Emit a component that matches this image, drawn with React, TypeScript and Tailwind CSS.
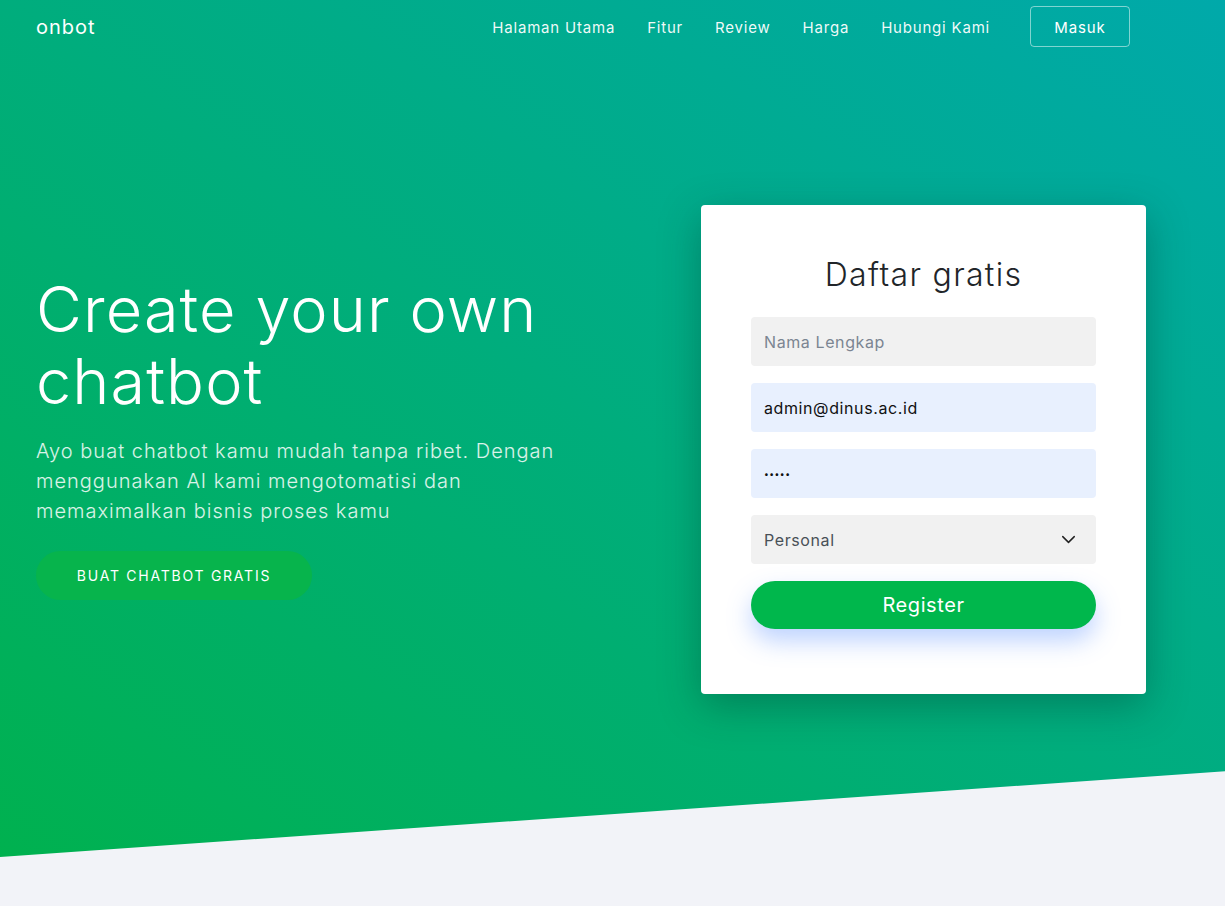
import { ChevronDown } from "lucide-react";

const navLinks = ["Halaman Utama", "Fitur", "Review", "Harga", "Hubungi Kami"];

function Navbar() {
  return (
    <nav className="flex h-[53px] items-center justify-between pl-9 pr-[95px]">
      <a className="text-[20px] tracking-[1px] text-white">onbot</a>
      <div className="flex items-center">
        <ul className="flex items-center gap-8 pt-[3px] text-[15px] tracking-[0.8px] text-white/95">
          {navLinks.map((l) => (
            <li key={l}>{l}</li>
          ))}
        </ul>
        <button className="ml-10 h-[41px] w-[100px] rounded-[4px] border border-white/50 pt-[3px] text-[15px] tracking-[0.9px] text-white">
          Masuk
        </button>
      </div>
    </nav>
  );
}

function RegisterCard() {
  return (
    <div className="w-[445px] rounded-[4px] bg-white px-[50px] pt-[50px] pb-[65px] shadow-[0_12px_40px_rgba(0,50,40,0.35)]">
      <h2 className="mb-[22px] text-center text-[32px] font-light leading-[40px] tracking-[1.3px] text-[#212529]">Daftar gratis</h2>
      <form className="flex flex-col gap-[17px] tracking-[0.6px]" onSubmit={(e) => e.preventDefault()}>
        <input
          type="text"
          placeholder="Nama Lengkap"
          className="h-[49px] rounded-[4px] bg-[#f1f1f1] px-[13px] text-[16px] text-[#212529] outline-none placeholder:text-[#7b8591]"
        />
        <input
          type="email"
          defaultValue="admin@dinus.ac.id"
          className="h-[49px] rounded-[4px] bg-[#e8f0fe] px-[13px] text-[16px] text-[#111] outline-none"
        />
        <input
          type="password"
          defaultValue="12345"
          className="h-[49px] rounded-[4px] bg-[#e8f0fe] px-[13px] text-[8.5px] tracking-[0.5px] text-[#111] outline-none"
        />
        <div className="relative">
          <select className="h-[49px] w-full appearance-none rounded-[4px] bg-[#f1f1f1] px-[13px] text-[16px] text-[#495057] outline-none">
            <option>Personal</option>
            <option>Bisnis</option>
          </select>
          <ChevronDown className="pointer-events-none absolute right-[16px] top-[13px] text-[#222]" size={23} strokeWidth={1.5} />
        </div>
        <button
          type="submit"
          className="h-[48px] rounded-full bg-[#00b74c] text-[20px] text-white shadow-[0_12px_24px_rgba(70,130,255,0.35)]"
        >
          Register
        </button>
      </form>
    </div>
  );
}

export default function App() {
  return (
    <div className="min-h-screen bg-[#f2f3f8] font-['Inter',sans-serif]">
      <section className="h-[857px] bg-[linear-gradient(to_top_right,#00b14f,#00a9aa)] [clip-path:polygon(0_0,100%_0,100%_90%,0_100%)]">
        <Navbar />
        <div className="flex items-start justify-between pl-9 pr-[79px] pt-[152px]">
          <div className="mt-[68px] w-[560px] text-white">
            <h1 className="text-[63px] font-light leading-[72px] tracking-[1.1px]">Create your own chatbot</h1>
            <p className="mt-[19px] text-[20px] font-light leading-[30px] tracking-[1px] text-white/85">
              Ayo buat chatbot kamu mudah tanpa ribet. Dengan menggunakan AI kami mengotomatisi dan memaximalkan bisnis proses kamu
            </p>
            <button className="mt-[25px] h-[49px] w-[276px] rounded-full bg-[#07b44c] text-[14px] tracking-[1.75px] text-white">
              BUAT CHATBOT GRATIS
            </button>
          </div>
          <RegisterCard />
        </div>
      </section>
    </div>
  );
}
